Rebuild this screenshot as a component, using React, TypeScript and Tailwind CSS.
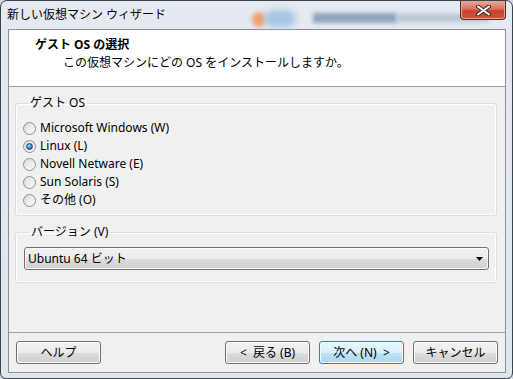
import React from 'react';

const ui = "font-['Noto_Sans','Noto_Sans_CJK_JP',sans-serif] text-[12px] leading-[16px] text-black";

function Radio({ label, checked }: { label: string; checked?: boolean }) {
  return (
    <div className="flex items-center h-[18px]">
      <span className="w-[13px] h-[13px] rounded-full border border-[#8f8f8f] bg-[linear-gradient(135deg,#dcdcdc,#fbfbfb)] flex items-center justify-center">
        {checked && (
          <span className="w-[7px] h-[7px] rounded-full border border-[#1c4f7a] bg-[radial-gradient(circle_at_40%_35%,#9fe0fb,#2a7bb5_60%,#174e7e)]" />
        )}
      </span>
      <span className="ml-[4px]">{label}</span>
    </div>
  );
}

function Btn({ label, primary }: { label: string; primary?: boolean }) {
  return (
    <button
      className={
        primary
          ? 'w-[85px] h-[23px] rounded-[3px] border border-[#3c7fb1] shadow-[inset_0_0_0_1px_#f4fbff] bg-[linear-gradient(#eaf6fd_0%,#d9effc_50%,#bee3f7_51%,#a9d7f2_100%)] flex items-center justify-center whitespace-pre'
          : 'w-[85px] h-[23px] rounded-[3px] border border-[#707070] shadow-[inset_0_0_0_1px_#fbfbfb] bg-[linear-gradient(#f2f2f2_0%,#ebebeb_50%,#dddddd_51%,#cfcfcf_100%)] flex items-center justify-center whitespace-pre'
      }
    >
      {label}
    </button>
  );
}

export default function App() {
  return (
    <div className={`w-[513px] h-[379px] overflow-hidden bg-[#cfd6dd] ${ui}`}>
      <div className="w-full h-full flex flex-col border border-[#3a444f] rounded-t-[7px] rounded-b-[6px] bg-[linear-gradient(#e4eaf0,#dfe6ed)]">
        {/* title bar, with the blurred desktop behind the glass */}
        <div className="relative h-[28px] flex items-start">
          <span className="absolute left-[251px] top-[11px] w-[14px] h-[15px] rounded-full bg-[#f0a070] blur-[2px]" />
          <span className="absolute left-[263px] top-[9px] w-[32px] h-[17px] rounded-full bg-[#a8c6e4] blur-[3px]" />
          <span className="absolute left-[312px] top-[12px] w-[84px] h-[10px] bg-[#8fa3ba] blur-[2px]" />
          <span className="absolute left-[396px] top-[13px] w-[92px] h-[8px] bg-[#b9c6d4] blur-[2px]" />
          <div className="relative pl-[6px] h-[28px] flex items-center">新しい仮想マシン ウィザード</div>
          <div className="flex-1" />
          <div className="relative mr-[6px] w-[46px] h-[19px] rounded-b-[4px] border border-t-0 border-[#5a2418] shadow-[inset_0_0_0_1px_#e9a593] bg-[linear-gradient(#e7a898_0%,#d8705c_45%,#c8432a_55%,#c9553b_100%)] flex items-center justify-center">
            <svg width="15" height="11" viewBox="0 0 15 11">
              <path d="M2 1.5 L13 9.5 M13 1.5 L2 9.5" stroke="#3a2a2a" strokeWidth="4" strokeLinecap="round" />
              <path d="M2 1.5 L13 9.5 M13 1.5 L2 9.5" stroke="#ffffff" strokeWidth="2" strokeLinecap="round" />
            </svg>
          </div>
        </div>

        {/* client */}
        <div className="ml-[7px] mr-[6px] mb-[5px] flex-1 flex flex-col border border-[#8a9096] bg-[#f0f0f0]">
          <div className="h-[57px] bg-white border-b border-[#a0a0a0] pt-[7px]">
            <div className="pl-[26px] font-bold">ゲスト OS の選択</div>
            <div className="pl-[54px] mt-[2px]">この仮想マシンにどの OS をインストールしますか。</div>
          </div>

          <div className="flex-1 pt-[8px] pl-[6px] pr-[8px]">
            <fieldset className="border border-[#d5dfe5] rounded-[3px] shadow-[inset_0_0_0_1px_#ffffff] pl-[7px] pt-[8px] pb-[6px]">
              <legend className="ml-[5px] px-[2px]">ゲスト OS</legend>
              <Radio label="Microsoft Windows (W)" />
              <Radio label="Linux (L)" checked />
              <Radio label="Novell Netware (E)" />
              <Radio label="Sun Solaris (S)" />
              <Radio label="その他 (O)" />
            </fieldset>

            <fieldset className="mt-[8px] border border-[#d5dfe5] rounded-[3px] shadow-[inset_0_0_0_1px_#ffffff] pl-[8px] pr-[7px] pt-[7px] pb-[12px]">
              <legend className="ml-[5px] px-[2px]">バージョン (V)</legend>
              <div className="h-[23px] rounded-[3px] border border-[#707070] shadow-[inset_0_0_0_1px_#fbfbfb] bg-[linear-gradient(#f2f2f2_0%,#ebebeb_50%,#dddddd_51%,#cfcfcf_100%)] flex items-center pl-[3px] pr-[5px]">
                <span className="flex-1">Ubuntu 64 ビット</span>
                <svg width="7" height="4" viewBox="0 0 7 4">
                  <path d="M0 0 H7 L3.5 4 Z" fill="#000" />
                </svg>
              </div>
            </fieldset>
          </div>

          <div className="border-t border-[#a0a0a0] h-[40px] pt-[8px] pl-[7px] pr-[7px] flex items-start">
            <Btn label="ヘルプ" />
            <div className="flex-1" />
            <div className="flex gap-[9px]">
              <Btn label="<  戻る (B)" />
              <Btn label="次へ (N)  >" primary />
              <Btn label="キャンセル" />
            </div>
          </div>
        </div>
      </div>
    </div>
  );
}
